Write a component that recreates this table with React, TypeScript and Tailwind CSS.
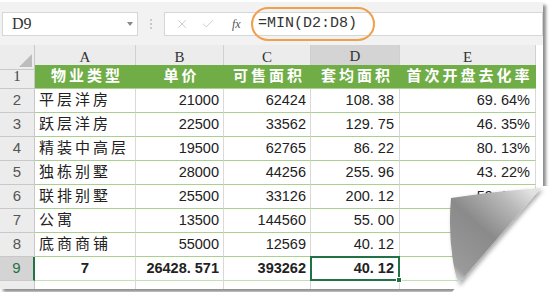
import { Check, X } from 'lucide-react';

const GRID = 'grid grid-cols-[35px_101px_88px_87px_89px_136px_7px]';
const SANS = "font-['Liberation_Sans',Arial,sans-serif]";
const CJK = "font-['Liberation_Sans','Noto_Sans_CJK_SC',sans-serif]";

const rows = [
  ['2', '平层洋房', '21000', '62424', '108. 38', '69. 64%'],
  ['3', '跃层洋房', '22500', '33562', '129. 75', '46. 35%'],
  ['4', '精装中高层', '19500', '62765', '86. 22', '80. 13%'],
  ['5', '独栋别墅', '28000', '44256', '255. 96', '43. 22%'],
  ['6', '联排别墅', '25500', '33126', '200. 12', '59. 09%'],
  ['7', '公寓', '13500', '144560', '55. 00', ''],
  ['8', '底商商铺', '55000', '12569', '40. 12', ''],
];

function FormulaBar() {
  return (
    <div className="relative flex h-[43px] items-start bg-[#f2f2f2] pt-[10px]">
      <div className="ml-[2px] flex h-[24px] w-[136px] items-center justify-between border border-[#d6d6d6] bg-white pl-[9px] pr-[4px]">
        <span className="font-['Liberation_Serif',serif] text-[16px] text-[#333]">D9</span>
        <span className="h-0 w-0 border-x-[3px] border-t-[4px] border-x-transparent border-t-[#888]" />
      </div>
      <div className="flex h-[24px] w-[26px] flex-col items-center justify-center gap-[2px]">
        <span className="h-[2px] w-[2px] rounded-full bg-[#bbb]" />
        <span className="h-[2px] w-[2px] rounded-full bg-[#bbb]" />
        <span className="h-[2px] w-[2px] rounded-full bg-[#bbb]" />
      </div>
      <div className="flex h-[24px] flex-1 items-center border border-[#d6d6d6] bg-white">
        <div className="flex w-[87px] items-center pl-[10px]">
          <X size={14} strokeWidth={1.3} color="#bdbdbd" />
          <Check size={14} strokeWidth={1.3} color="#bdbdbd" className="ml-[12px]" />
          <span className="ml-[17px] font-['Liberation_Serif',serif] text-[12px] italic text-[#555]">fx</span>
        </div>
        <span className="pl-[6px] font-['Liberation_Mono',monospace] text-[15px] text-[#333]">=MIN(D2:D8)</span>
      </div>
      <div className="absolute left-[251px] top-[5px] h-[34px] w-[124px] rounded-full border-2 border-[#f0a04b]" />
    </div>
  );
}

function ColumnHeaders() {
  const letters = ['A', 'B', 'C', 'D', 'E'];
  return (
    <div className={`${GRID} h-[20px] font-['Liberation_Serif',serif] text-[15px] text-[#333]`}>
      <div className="relative border-b border-r border-[#c8c8c8] bg-[#ececec]">
        <span className="absolute bottom-[2px] right-[2px] h-0 w-0 border-b-[13px] border-l-[13px] border-b-[#bcbcbc] border-l-transparent" />
      </div>
      {letters.map(l => (
        <div
          key={l}
          className={`flex items-center justify-center border-r border-[#d0d0d0] ${
            l === 'D' ? 'border-b-2 border-b-[#217346] bg-[#d4d4d4]' : 'border-b border-b-[#c8c8c8] bg-[#ececec]'
          }`}
        >
          {l}
        </div>
      ))}
      <div className="bg-white" />
    </div>
  );
}

function HeaderRow() {
  const titles = ['物业类型', '单价', '可售面积', '套均面积', '首次开盘去化率'];
  return (
    <div className={`${GRID} h-[24px]`}>
      <div className="flex items-center justify-center border-b border-r border-[#c8c8c8] bg-[#ececec] font-['Liberation_Serif',serif] text-[15px] text-[#444]">
        1
      </div>
      {titles.map(t => (
        <div
          key={t}
          className={`flex items-center justify-center border-b border-[#a9d08e] bg-[#70ad47] ${CJK} pl-[3px] text-[15px] font-bold tracking-[3px] text-white`}
        >
          {t}
        </div>
      ))}
      <div className="bg-white" />
    </div>
  );
}

function DataRow({ cells, total }: { cells: string[]; total?: boolean }) {
  const [num, name, price, area, avg, rate] = cells;
  const numCls = `flex items-center justify-end border-r border-[#d9d9d9] pr-[4px] ${SANS} text-[14.5px] text-[#222]`;
  const line = total ? 'border-b border-b-[#c6e0b4]' : 'border-b border-b-[#a9d08e]';
  return (
    <div className={`${GRID} h-[24px] ${total ? 'font-bold' : ''}`}>
      <div
        className={`flex items-center justify-center ${SANS} text-[15px] font-normal ${
          total
            ? 'border-b border-r-2 border-b-[#c8c8c8] border-r-[#217346] bg-[#d4d4d4] text-[#217346]'
            : 'border-b border-r border-[#c8c8c8] bg-[#ececec] text-[#555]'
        }`}
      >
        {num}
      </div>
      <div
        className={`flex items-center border-r border-[#d9d9d9] ${line} ${
          total ? `justify-center ${SANS} text-[15px]` : `pl-[4px] ${CJK} text-[15px] tracking-[3px]`
        } text-[#222]`}
      >
        {name}
      </div>
      <div className={`${numCls} ${line}`}>{price}</div>
      <div className={`${numCls} ${line}`}>{area}</div>
      <div className={`${numCls} ${line} relative pr-[5px]`}>
        {avg}
        {total && (
          <span className="absolute -bottom-[1px] -left-[1px] -right-[1px] -top-[1px] border-2 border-[#217346]">
            <span className="absolute -bottom-[4px] -right-[4px] h-[6px] w-[6px] border border-white bg-[#217346]" />
          </span>
        )}
      </div>
      <div className={`${numCls} ${line} pr-[5px]`}>{rate}</div>
      <div className="bg-white" />
    </div>
  );
}

function PageCurl() {
  return (
    <svg className="pointer-events-none absolute left-0 top-0" width={552} height={292} viewBox="0 0 552 292">
      <defs>
        <linearGradient id="curl" gradientUnits="userSpaceOnUse" x1={452} y1={282} x2={532} y2={192}>
          <stop offset="0" stopColor="#f4f4f4" />
          <stop offset="0.12" stopColor="#9a9a9a" />
          <stop offset="0.5" stopColor="#8a8a8a" />
          <stop offset="0.8" stopColor="#b8b8b8" />
          <stop offset="1" stopColor="#e2e2e2" />
        </linearGradient>
        <filter id="curlShadow" x="-20%" y="-20%" width="140%" height="140%">
          <feDropShadow dx={2} dy={2} stdDeviation={2} floodColor="#000" floodOpacity={0.35} />
        </filter>
      </defs>
      <path d="M540 186 L552 186 L552 292 L452 292 L458 285 Z" fill="#fff" />
      <path
        d="M541 188 Q 497 191 451 198 Q 447 244 458 284 Z"
        fill="url(#curl)"
        filter="url(#curlShadow)"
      />
    </svg>
  );
}

export default function App() {
  return (
    <div className="relative h-[292px] w-[552px] overflow-hidden bg-white">
      <div className="mt-[2px] h-[287px] w-[543px] overflow-hidden bg-white shadow-[3px_3px_3px_rgba(0,0,0,0.45)]">
        <FormulaBar />
        <ColumnHeaders />
        <HeaderRow />
        {rows.map(r => (
          <DataRow key={r[0]} cells={r} />
        ))}
        <DataRow cells={['9', '7', '26428. 571', '393262', '40. 12', '']} total />
        <div className={`${GRID} h-[10px]`}>
          <div className="border-r border-[#c8c8c8] bg-[#ececec]" />
          <div className="border-r border-[#d9d9d9]" />
          <div className="border-r border-[#d9d9d9]" />
          <div className="border-r border-[#d9d9d9]" />
          <div className="border-r border-[#d9d9d9]" />
          <div className="border-r border-[#d9d9d9]" />
          <div />
        </div>
      </div>
      <PageCurl />
    </div>
  );
}
